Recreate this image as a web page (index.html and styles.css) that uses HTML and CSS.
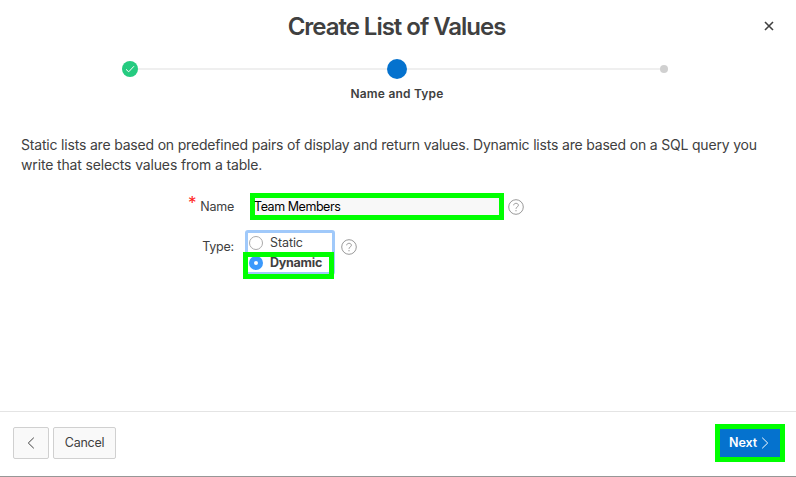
FILE: index.html
```html
<!DOCTYPE html>
<html lang="en">
<head>
<meta charset="utf-8">
<title>Create List of Values</title>
<link rel="stylesheet" href="styles.css">
</head>
<body>
<div class="dialog">
  <header class="header">
    <h1 class="title"><span>Create List of Values</span></h1>
    <button class="close" aria-label="Close"><svg width="10" height="10" viewBox="0 0 10 10"><path d="M1 1l8 8M9 1l-8 8"/></svg></button>
  </header>
  <div class="progress">
    <span class="step done"><svg width="16" height="16" viewBox="0 0 16 16"><path d="M4 8.3l2.7 2.5L12 5.2"/></svg></span>
    <span class="track first"></span>
    <span class="step current"></span>
    <span class="track"></span>
    <span class="step pending"></span>
  </div>
  <div class="step-label"><span>Name and Type</span></div>
  <main class="body">
    <p class="intro"><span class="line-a">Static lists are based on predefined pairs of display and return values. Dynamic lists are based on a SQL query you</span><br><span class="line-b">write that selects values from a table.</span></p>
    <div class="row name-row">
      <div class="label"><span class="required">*</span><span class="label-name">Name</span></div>
      <div class="input">Team Members</div>
      <svg class="help" width="16" height="16" viewBox="0 0 16 16"><circle cx="8" cy="8" r="7.3"/><path d="M5.7 6.3C5.7 3.6 10.4 3.7 10.4 6.3C10.4 8 8 7.8 8 9.8M8 11v1.3"/></svg>
    </div>
    <div class="row type-row">
      <div class="label"><span class="label-type">Type:</span></div>
      <div class="radios">
        <div class="radio"><span class="dot"></span><span class="static">Static</span></div>
        <div class="radio"><span class="dot on"></span><b class="dynamic">Dynamic</b></div>
        <span class="highlight"></span>
      </div>
      <svg class="help" width="16" height="16" viewBox="0 0 16 16"><circle cx="8" cy="8" r="7.3"/><path d="M5.7 6.3C5.7 3.6 10.4 3.7 10.4 6.3C10.4 8 8 7.8 8 9.8M8 11v1.3"/></svg>
    </div>
  </main>
  <footer class="footer">
    <button class="btn back" aria-label="Back"><svg width="8" height="12" viewBox="0 0 8 12"><path d="M6.8.7L1.3 6l5.5 5.3"/></svg></button>
    <button class="btn cancel"><span>Cancel</span></button>
    <button class="next"><span>Next</span><svg width="8" height="12" viewBox="0 0 8 12"><path d="M1.2.7L6.7 6l-5.5 5.3"/></svg></button>
  </footer>
</div>
</body>
</html>
```
FILE: styles.css
```css
* { box-sizing: border-box; }
body { margin: 0; background: #fff; color: #404040; font: 12.5px/20px Inter, "Liberation Sans", sans-serif; letter-spacing: -.25px; }
button { font: inherit; color: inherit; padding: 0; margin: 0; letter-spacing: inherit; }
svg { display: block; fill: none; stroke: currentColor; flex: none; }
.dialog { height: 477px; display: flex; flex-direction: column; border-bottom: 1px solid #979797; }
.header { height: 54px; display: grid; grid-template-columns: 40px 1fr 40px; align-items: center; padding-right: 7px; padding-left: 4px; }
.title { grid-column: 2; margin: 0; text-align: center; font-size: 24px; line-height: 32px; font-weight: 600; letter-spacing: -1.02px; white-space: nowrap; }
.close { border: 0; background: none; display: flex; justify-content: center; margin-left: -1px; margin-top: -3px; }
.close svg { stroke-width: 1.6; }
.progress { height: 30px; display: flex; align-items: center; padding: 0 128px 0 122px; }
.track { flex: 1; height: 2px; background: #efefef; }
.first { flex: none; width: 249px; }
.step { border-radius: 50%; }
.done { width: 16px; height: 16px; background: #25cb80; color: #fff; }
.current { width: 20px; height: 20px; background: #0572ce; }
.pending { width: 8px; height: 8px; background: #d0d0d0; }
.step-label { height: 20px; text-align: center; font-weight: 600; font-size: 12px; padding-right: 2px; letter-spacing: .2px; }
.body { flex: 1; padding: 31px 20px 0 21px; }
.intro { margin: 0; font-size: 14px; line-height: 20px; white-space: nowrap; }
.line-a { letter-spacing: -.188px; }
.line-b { letter-spacing: -.15px; }
.row { display: flex; }
.name-row { margin-top: 18px; height: 27px; align-items: center; }
.type-row { margin-top: 10px; height: 45px; }
.label { width: 213px; display: flex; justify-content: flex-end; }
.type-row .label { padding-top: 7px; letter-spacing: -.2px; }
.required { color: #f22; font-size: 17px; line-height: 20px; margin-right: 4px; margin-top: -4px; }
.input { margin-left: 16px; width: 254px; height: 27px; border: 5px solid #0f0; background: #f8f8f8; color: #000; line-height: 18px; white-space: nowrap; text-indent: -1px; letter-spacing: -.45px; }
.help { margin-left: 4px; color: #999; margin-top: 1px; }
.type-row .help { margin: 9px 0 0 6px; }
.radios { position: relative; margin-left: 11px; width: 90px; height: 45px; border: 3px solid #a0c9fa; border-radius: 3px; }
.radio { display: flex; align-items: center; height: 20px; gap: 7px; padding-left: 1px; }
.static { letter-spacing: -.1px; }
.dynamic { letter-spacing: -.25px; }
.dot { width: 14px; height: 14px; border: 1px solid #aaa; border-radius: 50%; background: #fff; }
.dot.on { border: 5px solid #3b99fc; }
.highlight { position: absolute; left: -5px; top: 19px; width: 91px; height: 27px; border: 5px solid #0f0; }
.footer { height: 65px; border-top: 1px solid #e4e4e4; display: flex; align-items: center; padding: 0 11px 2px 13px; }
.btn { height: 32px; border: 1px solid #d0d0d0; border-radius: 2px; background: #f9f9f9; display: flex; align-items: center; justify-content: center; }
.back { width: 36px; margin-right: 4px; }
.cancel { width: 63px; }
.next { margin-left: auto; width: 70px; height: 38px; border: 5px solid #0f0; background: #0572ce; color: #fff; font-weight: 600; display: flex; align-items: center; justify-content: center; gap: 4px; padding-right: 2px; letter-spacing: -.1px; }
```
